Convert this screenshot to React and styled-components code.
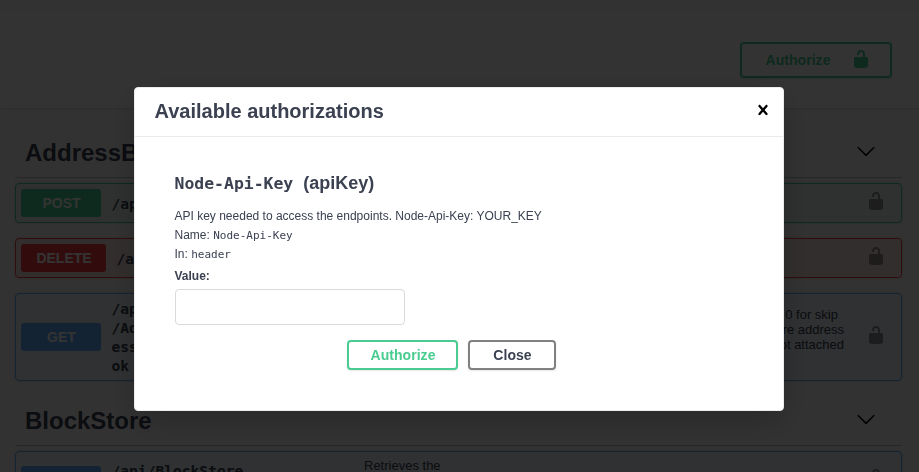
import React from 'react';
import styled, { createGlobalStyle } from 'styled-components';

const Global = createGlobalStyle`
  * { box-sizing: border-box; }
  body { margin: 0; background: #fafafa; overflow: hidden; font-family: "Liberation Sans", Arial, sans-serif; color: #3b4151; }
`;
const mono = '"DejaVu Sans Mono", Consolas, monospace';

const Page = styled.div`height: 472px; overflow: hidden; padding-top: 12px;`;
const Scheme = styled.header`
  height: 96px; padding: 30px 27px 0 0; background: #fff;
  box-shadow: 0 1px 2px rgba(0, 0, 0, 0.15);
  display: flex; justify-content: flex-end; align-items: flex-start;
`;
const Button = styled.button`
  height: ${p => p.$h || 30}px; width: ${p => p.$w}px; padding: 0 0 0 ${p => p.$inset || 1}px;
  display: flex; align-items: center; justify-content: center; gap: 20px;
  font: bold 14px "Liberation Sans", Arial, sans-serif; letter-spacing: 0.05px;
  color: ${p => p.$color || '#3b4151'};
  border: 2px solid ${p => p.$border || p.$color}; border-radius: 4px;
  background: transparent; box-shadow: 0 1px 2px rgba(0, 0, 0, 0.1);
  svg { fill: currentColor; margin-top: -2px; }
`;
const Sections = styled.main`padding: 20px 17px 0 15px;`;
const TagHeader = styled.div`
  height: 50px; margin-bottom: 5px; padding: 0 26px 0 10px;
  display: flex; align-items: center; justify-content: space-between;
  border-bottom: 1px solid rgba(59, 65, 81, 0.3);
  svg { fill: #000; margin-bottom: 3px; }
`;
const TagName = styled.h3`margin: 0; font-size: 24px; line-height: 28px; font-weight: bold;`;
const Section = styled.section`margin-bottom: 14px;`;
const Operation = styled.div`
  height: ${p => p.$h || 40}px; margin-bottom: 15px; padding: 0 15px 0 5px;
  display: flex; align-items: center;
  border: 1px solid ${p => p.$color}; border-radius: 4px;
  background: ${p => p.$color}1a; box-shadow: 0 0 3px rgba(0, 0, 0, 0.19);
  svg { fill: #000; opacity: 0.4; margin-bottom: 5px; }
`;
const Method = styled.span`
  flex: none; width: ${p => p.$w || 80}px; height: 28px; line-height: 28px; border-radius: 3px;
  padding-left: 1px;
  background: ${p => p.$color}; color: #fff; font-size: 14px; font-weight: bold; text-align: center;
`;
const Path = styled.span`
  width: 263px; padding-left: 10.5px; flex: none; white-space: pre-line;
  font: bold 14.6px/19px ${mono};
`;
const Summary = styled.span`
  flex: 1; font-size: 13px; line-height: 15px; white-space: pre;
`;
const SummaryTail = styled(Summary)`
  padding-right: 22px; margin-top: -15px; display: flex; flex-direction: column; align-items: flex-end;
`;
const Line = styled.span`padding-right: ${p => p.$end || 0}px;`;

const Backdrop = styled.div`
  position: fixed; inset: 0; background: rgba(0, 0, 0, 0.8);
  display: flex; justify-content: center; align-items: flex-start; padding-top: 87px; padding-right: 1px;
`;
const Dialog = styled.div`
  width: 650px; height: 324px; background: #fff; border: 1px solid #ebebeb; border-radius: 4px;
  box-shadow: 0 10px 30px rgba(0, 0, 0, 0.2);
`;
const DialogHeader = styled.div`
  height: 49px; padding: 0 10px 1px 19.5px; border-bottom: 1px solid #ebebeb;
  display: flex; align-items: center; justify-content: space-between;
  h3 { margin: 0; font-size: 20px; font-weight: bold; }
  svg { margin-bottom: 3px; }
`;
const DialogBody = styled.div`padding: 34px 39.5px 0; font-size: 12px;`;
const SchemeName = styled.h4`
  margin: 0 0 12px; height: 24px; font-size: 18px; line-height: 24px; white-space: pre;
  display: flex; align-items: baseline;
`;
const Code = styled.code`
  font-family: ${mono}; font-size: ${p => p.$size || 11}px;
`;
const Info = styled.p`margin: 0; height: 19px; line-height: 19px; white-space: pre;`;
const Label = styled.label`display: block; margin-top: 3px; line-height: 18px; font-weight: bold;`;
const Input = styled.input`
  display: block; width: 230px; height: 36px; margin: 4px 0 15px 0.5px;
  border: 1px solid #d9d9d9; border-radius: 4px; background: #fff;
`;
const Actions = styled.div`display: flex; gap: 10px; padding-left: 172.5px;`;

const Icon = ({ d, size = 20 }) => (
  <svg width={size} height={size} viewBox="0 0 20 20"><path d={d} /></svg>
);
const LOCK = 'M15.8 8H14V5.6C14 2.703 12.665 1 10 1 7.334 1 6 2.703 6 5.6V6h2v-.801C8 3.754 8.797 3 10 3c1.203 0 2 .754 2 2.199V8H4c-.553 0-1 .646-1 1.199V17c0 .549.428 1.139.951 1.307l1.197.387C5.672 18.861 6.55 19 7.1 19h5.8c.549 0 1.428-.139 1.951-.307l1.196-.387c.524-.167.953-.757.953-1.306V9.199C17 8.646 16.352 8 15.8 8z';
const ARROW = 'M17.418 6.109c.272-.268.709-.268.979 0s.271.701 0 .969l-7.908 7.83c-.27.268-.707.268-.979 0l-7.908-7.83c-.27-.268-.27-.701 0-.969.271-.268.709-.268.979 0L10 13.25l7.418-7.141z';
const CLOSE = 'M14.348 14.849c-.469.469-1.229.469-1.697 0L10 11.819l-2.651 3.029c-.469.469-1.229.469-1.697 0-.469-.469-.469-1.229 0-1.697l2.758-3.15-2.759-3.152c-.469-.469-.469-1.228 0-1.697.469-.469 1.228-.469 1.697 0L10 8.183l2.651-3.031c.469-.469 1.228-.469 1.697 0 .469.469.469 1.229 0 1.697l-2.758 3.152 2.758 3.15c.469.469.469 1.229 0 1.698z';

const GREEN = '#49cc90', RED = '#f93e3e', BLUE = '#61affe';

export default function App() {
  return (
    <>
      <Global />
      <Page>
        <Scheme>
          <Button $color={GREEN} $w={152} $h={36} $inset={4}>Authorize<Icon d={LOCK} /></Button>
        </Scheme>
        <Sections>
          <Section>
            <TagHeader><TagName>AddressBook</TagName><Icon d={ARROW} /></TagHeader>
            <Operation $color={GREEN}>
              <Method $color={GREEN}>POST</Method>
              <Path>/api</Path><Summary /><Icon d={LOCK} />
            </Operation>
            <Operation $color={RED}>
              <Method $color={RED} $w={85}>DELETE</Method>
              <Path>/api</Path><Summary /><Icon d={LOCK} />
            </Operation>
            <Operation $color={BLUE} $h={88}>
              <Method $color={BLUE}>GET</Method>
              <Path>{'/api\n/Addr\nessbo\nok'}</Path>
              <SummaryTail>
                <Line $end={6}>0 for skip</Line><Line>re address</Line><Line>ot attached</Line>
              </SummaryTail>
              <Icon d={LOCK} />
            </Operation>
          </Section>
          <Section>
            <TagHeader><TagName>BlockStore</TagName><Icon d={ARROW} /></TagHeader>
            <Operation $color={BLUE} $h={58}>
              <Method $color={BLUE} />
              <Path>{'/api/BlockStore\n\u00a0'}</Path>
              <Summary>{'Retrieves the\n\n '}</Summary>
              <Icon d={LOCK} />
            </Operation>
          </Section>
        </Sections>
      </Page>
      <Backdrop>
        <Dialog>
          <DialogHeader><h3>Available authorizations</h3><Icon d={CLOSE} /></DialogHeader>
          <DialogBody>
            <SchemeName><Code $size={16.45}>Node-Api-Key</Code>{'  (apiKey)'}</SchemeName>
            <Info>API key needed to access the endpoints. Node-Api-Key: YOUR_KEY</Info>
            <Info>Name: <Code>Node-Api-Key</Code></Info>
            <Info>In: <Code>header</Code></Info>
            <Label htmlFor="api-key">Value:</Label>
            <Input id="api-key" />
            <Actions>
              <Button $color={GREEN} $w={111}>Authorize</Button>
              <Button $border="#808080" $w={88}>Close</Button>
            </Actions>
          </DialogBody>
        </Dialog>
      </Backdrop>
    </>
  );
}
